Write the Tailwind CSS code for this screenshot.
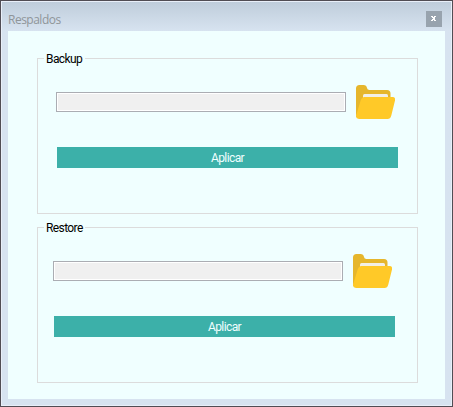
<!DOCTYPE html>
<html lang="es">
<head>
<meta charset="utf-8">
<title>Respaldos</title>
<script src="https://cdn.jsdelivr.net/npm/@tailwindcss/browser@4"></script>
</head>
<body class="overflow-hidden font-['Roboto','Noto_Sans',sans-serif] text-xs text-black">
<svg class="hidden">
  <symbol id="folder" viewBox="0 0 39 34">
    <path fill="#e6b62c" d="M0 29V3.500Q0 0 3.500 0H7.500Q10.500 0 11 3Q11.300 5 13.500 5H31Q34.500 5 34.500 8.500V14L5 33Q0 33 0 29Z"/>
    <path fill="#f2efe6" d="M7 14V10.500Q7 9 8.500 9H30.500Q32 9 32 10.500V14Z"/>
    <path fill="#ffc928" d="M8.500 12H36.500Q39.700 12 39 15.500L35.300 30.500Q34.500 34 31.500 34H3Q-.6 34 .1 30.500L4.500 16Q5.600 12 8.500 12Z"/>
  </symbol>
</svg>
<div class="flex h-[407px] w-[453px] flex-col border border-[#514d54] bg-[#d7e3f0]">
  <div class="flex grow flex-col border border-[#e9eff9] bg-linear-to-b from-[#bfcddb] to-[#d7e3f0] to-[29px] px-1.5 pb-1.5">
    <header class="flex h-[29px] shrink-0 items-start justify-between pr-[3px]">
      <h1 class="pt-[9px] font-['Open_Sans','Noto_Sans',sans-serif] leading-[18px] tracking-[-0.5px] text-[#8f9599]">Respaldos</h1>
      <button class="mt-[9px] flex size-4 items-start bg-[#98a3ae] pt-[5px] pl-[5px]" aria-label="Cerrar">
        <svg class="h-[5px] w-[5px]" viewBox="0 0 5 5" shape-rendering="crispEdges" fill="#fff"><path d="M0 0h2v1h1V0h2v1H4v1H3.500v1H4v1h1v1H3V4H2v1H0V4h1V3h.5V2H1V1H0z"/></svg>
      </button>
    </header>
    <main class="flex h-[368px] flex-col gap-[13px] bg-[#f0ffff] pt-[27px] pl-[29px]">
      <section class="flex h-[156px] w-[381px] flex-col border border-[#dcdcdc] pl-[18px]">
        <h2 class="-mt-[9px] -ml-3 h-[18px] w-[41px] bg-[#f0ffff] pl-[2px] leading-[19px] tracking-[-0.6px]">Backup</h2>
        <div class="mt-[17px] flex h-[34px] items-center gap-[10px]">
          <div class="h-5 w-[290px] border border-[#abadb3] bg-white p-px"><div class="h-full bg-[#f0f0f0]"></div></div>
          <svg class="h-[34px] w-[39px]"><use href="#folder"/></svg>
        </div>
        <button class="mt-7 ml-px h-[21px] w-[341px] bg-[#3cb0a9] leading-[22px] tracking-[-0.6px] text-[#f0ffff]">Aplicar</button>
      </section>
      <section class="flex h-[156px] w-[381px] flex-col border border-[#dcdcdc] pl-[15px]">
        <h2 class="-mt-[9px] -ml-[9px] h-[18px] w-[41px] bg-[#f0ffff] pl-[2px] leading-[19px] tracking-[-0.6px]">Restore</h2>
        <div class="mt-[17px] flex h-[34px] items-center gap-[10px]">
          <div class="h-5 w-[290px] border border-[#abadb3] bg-white p-px"><div class="h-full bg-[#f0f0f0]"></div></div>
          <svg class="h-[34px] w-[39px]"><use href="#folder"/></svg>
        </div>
        <button class="mt-7 ml-px h-[21px] w-[341px] bg-[#3cb0a9] leading-[22px] tracking-[-0.6px] text-[#f0ffff]">Aplicar</button>
      </section>
    </main>
  </div>
</div>
</body>
</html>
